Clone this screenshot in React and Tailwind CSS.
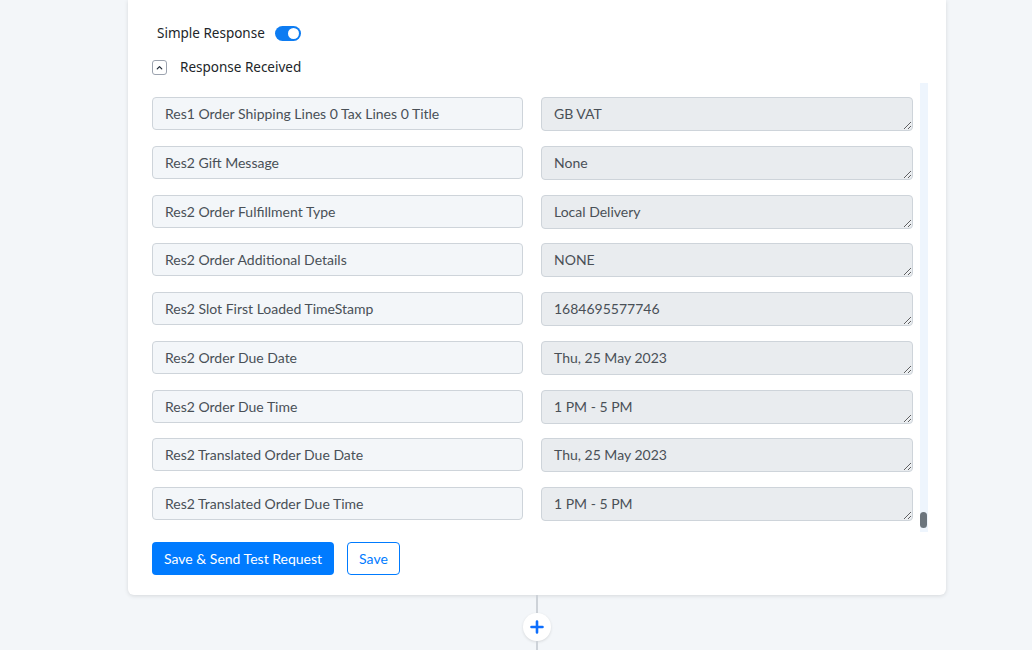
import React from 'react';

const rows = [
    ['Res1 Order Shipping Lines 0 Tax Lines 0 Title', 'GB VAT'],
    ['Res2 Gift Message', 'None'],
    ['Res2 Order Fulfillment Type', 'Local Delivery'],
    ['Res2 Order Additional Details', 'NONE'],
    ['Res2 Slot First Loaded TimeStamp', '1684695577746'],
    ['Res2 Order Due Date', 'Thu, 25 May 2023'],
    ['Res2 Order Due Time', '1 PM - 5 PM'],
    ['Res2 Translated Order Due Date', 'Thu, 25 May 2023'],
    ['Res2 Translated Order Due Time', '1 PM - 5 PM'],
];

export default function App() {
    return (
        <div className="w-[1032px] h-[650px] overflow-hidden bg-[#f3f6f9] font-['Lato','Liberation_Sans',sans-serif] text-[#212529]">
            <div className="ml-[128px] w-[818px] bg-white rounded-b-md shadow-[0_1px_4px_rgba(0,0,0,0.12)] pl-[24px] pr-[18px] pt-[24px] pb-[20px]">
                {/* toggle */}
                <div className="flex items-center h-[18px] pl-[5px]">
                    <span className="text-[13.5px] font-['Noto_Sans','Liberation_Sans',sans-serif]">Simple Response</span>
                    <span className="ml-[10px] w-[26px] h-[15px] rounded-full bg-[#0d7cf2] flex items-center justify-end pr-[2px]">
                        <span className="w-[11px] h-[11px] rounded-full bg-white" />
                    </span>
                </div>

                <div className="flex items-center h-[16px] mt-[17px]">
                    <span className="w-[15px] h-[15px] border border-[#9ca3af] rounded-[3px] flex items-center justify-center">
                        <svg width="9" height="9" viewBox="0 0 10 10" fill="none" stroke="#1f2937" strokeWidth="1.4" strokeLinecap="round" strokeLinejoin="round">
                            <path d="M2.5 6.5 5 4l2.5 2.5" />
                        </svg>
                    </span>
                    <span className="ml-[13px] text-[13.5px] font-['Noto_Sans','Liberation_Sans',sans-serif]">Response Received</span>
                </div>

                {/* response list */}
                <div className="flex mt-[8px] h-[449px]">
                    <div className="flex-1 flex flex-col gap-[14.75px] pt-[14px] overflow-hidden">
                        {rows.map(([label, value]) => (
                            <div key={label} className="flex gap-[18px] shrink-0">
                                <input
                                    readOnly
                                    value={label}
                                    className="w-[371px] h-[33px] px-[12px] bg-[#f3f6f9] border border-[#ced4da] rounded-[4px] text-[14px] text-[#495057] outline-none"
                                />
                                <textarea
                                    readOnly
                                    value={value}
                                    className="w-[372px] h-[34px] px-[12px] pt-[6px] bg-[#e9ecef] border border-[#ced4da] rounded-[4px] text-[14px] leading-[20px] text-[#495057] outline-none overflow-hidden"
                                />
                            </div>
                        ))}
                    </div>
                    <div className="w-[8px] ml-[7px] bg-[#eef5fd] flex flex-col justify-end pb-[4px]">
                        <div className="h-[16px] w-[7px] rounded-[4px] bg-[#6c757d]" />
                    </div>
                </div>

                <div className="flex items-center gap-[13px] mt-[10px]">
                    <button className="h-[33px] px-[12px] bg-[#007bff] text-white text-[14px] rounded-[4px]">Save &amp; Send Test Request</button>
                    <button className="h-[33px] px-[11px] border border-[#007bff] text-[#007bff] text-[14px] rounded-[4px] bg-white">Save</button>
                </div>
            </div>

            {/* connector */}
            <div className="ml-[536px] w-[2px] h-[18px] bg-[#cdd2d8]" />
            <div className="ml-[523px] w-[28px] h-[28px] rounded-full bg-white shadow-[0_1px_3px_rgba(0,0,0,0.12)] flex items-center justify-center">
                <svg width="14" height="14" viewBox="0 0 14 14" stroke="#0d6efd" strokeWidth="2.6" strokeLinecap="round">
                    <path d="M7 1.5v11M1.5 7h11" />
                </svg>
            </div>
            <div className="ml-[536px] w-[2px] h-[20px] bg-[#cdd2d8]" />
        </div>
    );
}
